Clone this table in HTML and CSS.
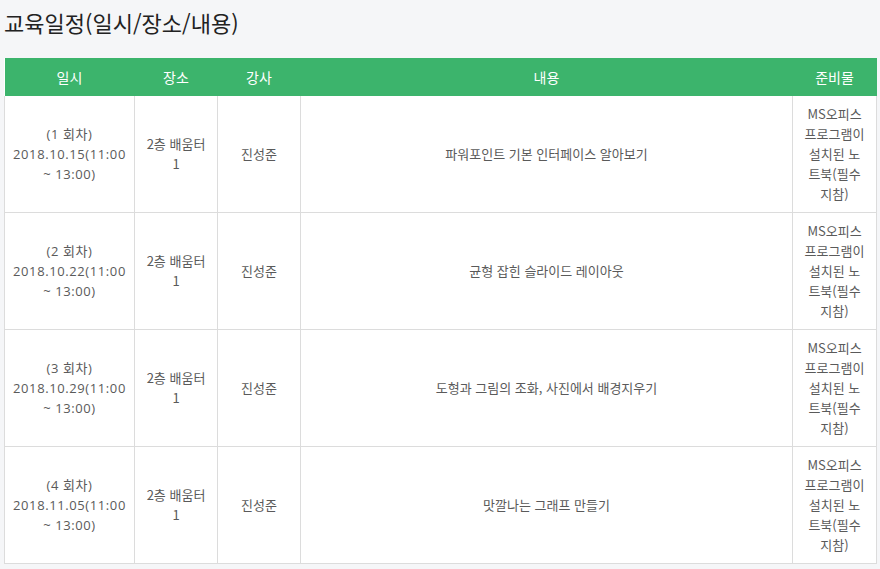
FILE: index.html
```html
<!DOCTYPE html>
<html lang="ko">
<head>
<meta charset="utf-8">
<title>교육일정</title>
<link rel="stylesheet" href="styles.css">
</head>
<body>
<div class="page">
  <h2 class="title">교육일정(일시/장소/내용)</h2>
  <table class="schedule">
    <colgroup>
      <col class="c-date">
      <col class="c-place">
      <col class="c-teacher">
      <col class="c-content">
      <col class="c-prep">
    </colgroup>
    <thead>
      <tr>
        <th>일시</th>
        <th>장소</th>
        <th>강사</th>
        <th>내용</th>
        <th>준비물</th>
      </tr>
    </thead>
    <tbody>
      <tr>
        <td>(1 회차)<br>2018.10.15(11:00<br>~ 13:00)</td>
        <td>2층 배움터<br>1</td>
        <td>진성준</td>
        <td>파워포인트 기본 인터페이스 알아보기</td>
        <td>MS오피스<br>프로그램이<br>설치된 노<br>트북(필수<br>지참)</td>
      </tr>
      <tr>
        <td>(2 회차)<br>2018.10.22(11:00<br>~ 13:00)</td>
        <td>2층 배움터<br>1</td>
        <td>진성준</td>
        <td>균형 잡힌 슬라이드 레이아웃</td>
        <td>MS오피스<br>프로그램이<br>설치된 노<br>트북(필수<br>지참)</td>
      </tr>
      <tr>
        <td>(3 회차)<br>2018.10.29(11:00<br>~ 13:00)</td>
        <td>2층 배움터<br>1</td>
        <td>진성준</td>
        <td>도형과 그림의 조화, 사진에서 배경지우기</td>
        <td>MS오피스<br>프로그램이<br>설치된 노<br>트북(필수<br>지참)</td>
      </tr>
      <tr>
        <td>(4 회차)<br>2018.11.05(11:00<br>~ 13:00)</td>
        <td>2층 배움터<br>1</td>
        <td>진성준</td>
        <td>맛깔나는 그래프 만들기</td>
        <td>MS오피스<br>프로그램이<br>설치된 노<br>트북(필수<br>지참)</td>
      </tr>
    </tbody>
  </table>
</div>
</body>
</html>
```

FILE: styles.css
```css
html, body {
  margin: 0;
  padding: 0;
  background: #f5f6f8;
}
body {
  font-family: "Noto Sans CJK KR", "Noto Sans", sans-serif;
  color: #5a5a5a;
}
.page {
  padding: 0 4px;
}
.title {
  margin: 0;
  padding-top: 6px;
  height: 58px;
  box-sizing: border-box;
  font-size: 22px;
  font-weight: 400;
  line-height: 32px;
  color: #222;
}
.schedule {
  width: 872px;
  table-layout: fixed;
  border-collapse: collapse;
  background: #fff;
}
.c-date { width: 130px; }
.c-place { width: 83px; }
.c-teacher { width: 83px; }
.c-content { width: 492px; }
.c-prep { width: 84px; }
.schedule th {
  background: #3cb46c;
  color: #fff;
  font-size: 14px;
  font-weight: 400;
  line-height: 20px;
  padding: 9px 4px;
  border: 0;
}
.schedule td {
  font-size: 13px;
  line-height: 20px;
  text-align: center;
  vertical-align: middle;
  padding: 8px 4px;
  border: 1px solid #dcdcdc;
  border-top: 0;
}
.schedule td:first-child {
  font-family: "Open Sans", "Noto Sans CJK KR", sans-serif;
  letter-spacing: 0.6px;
}
```
